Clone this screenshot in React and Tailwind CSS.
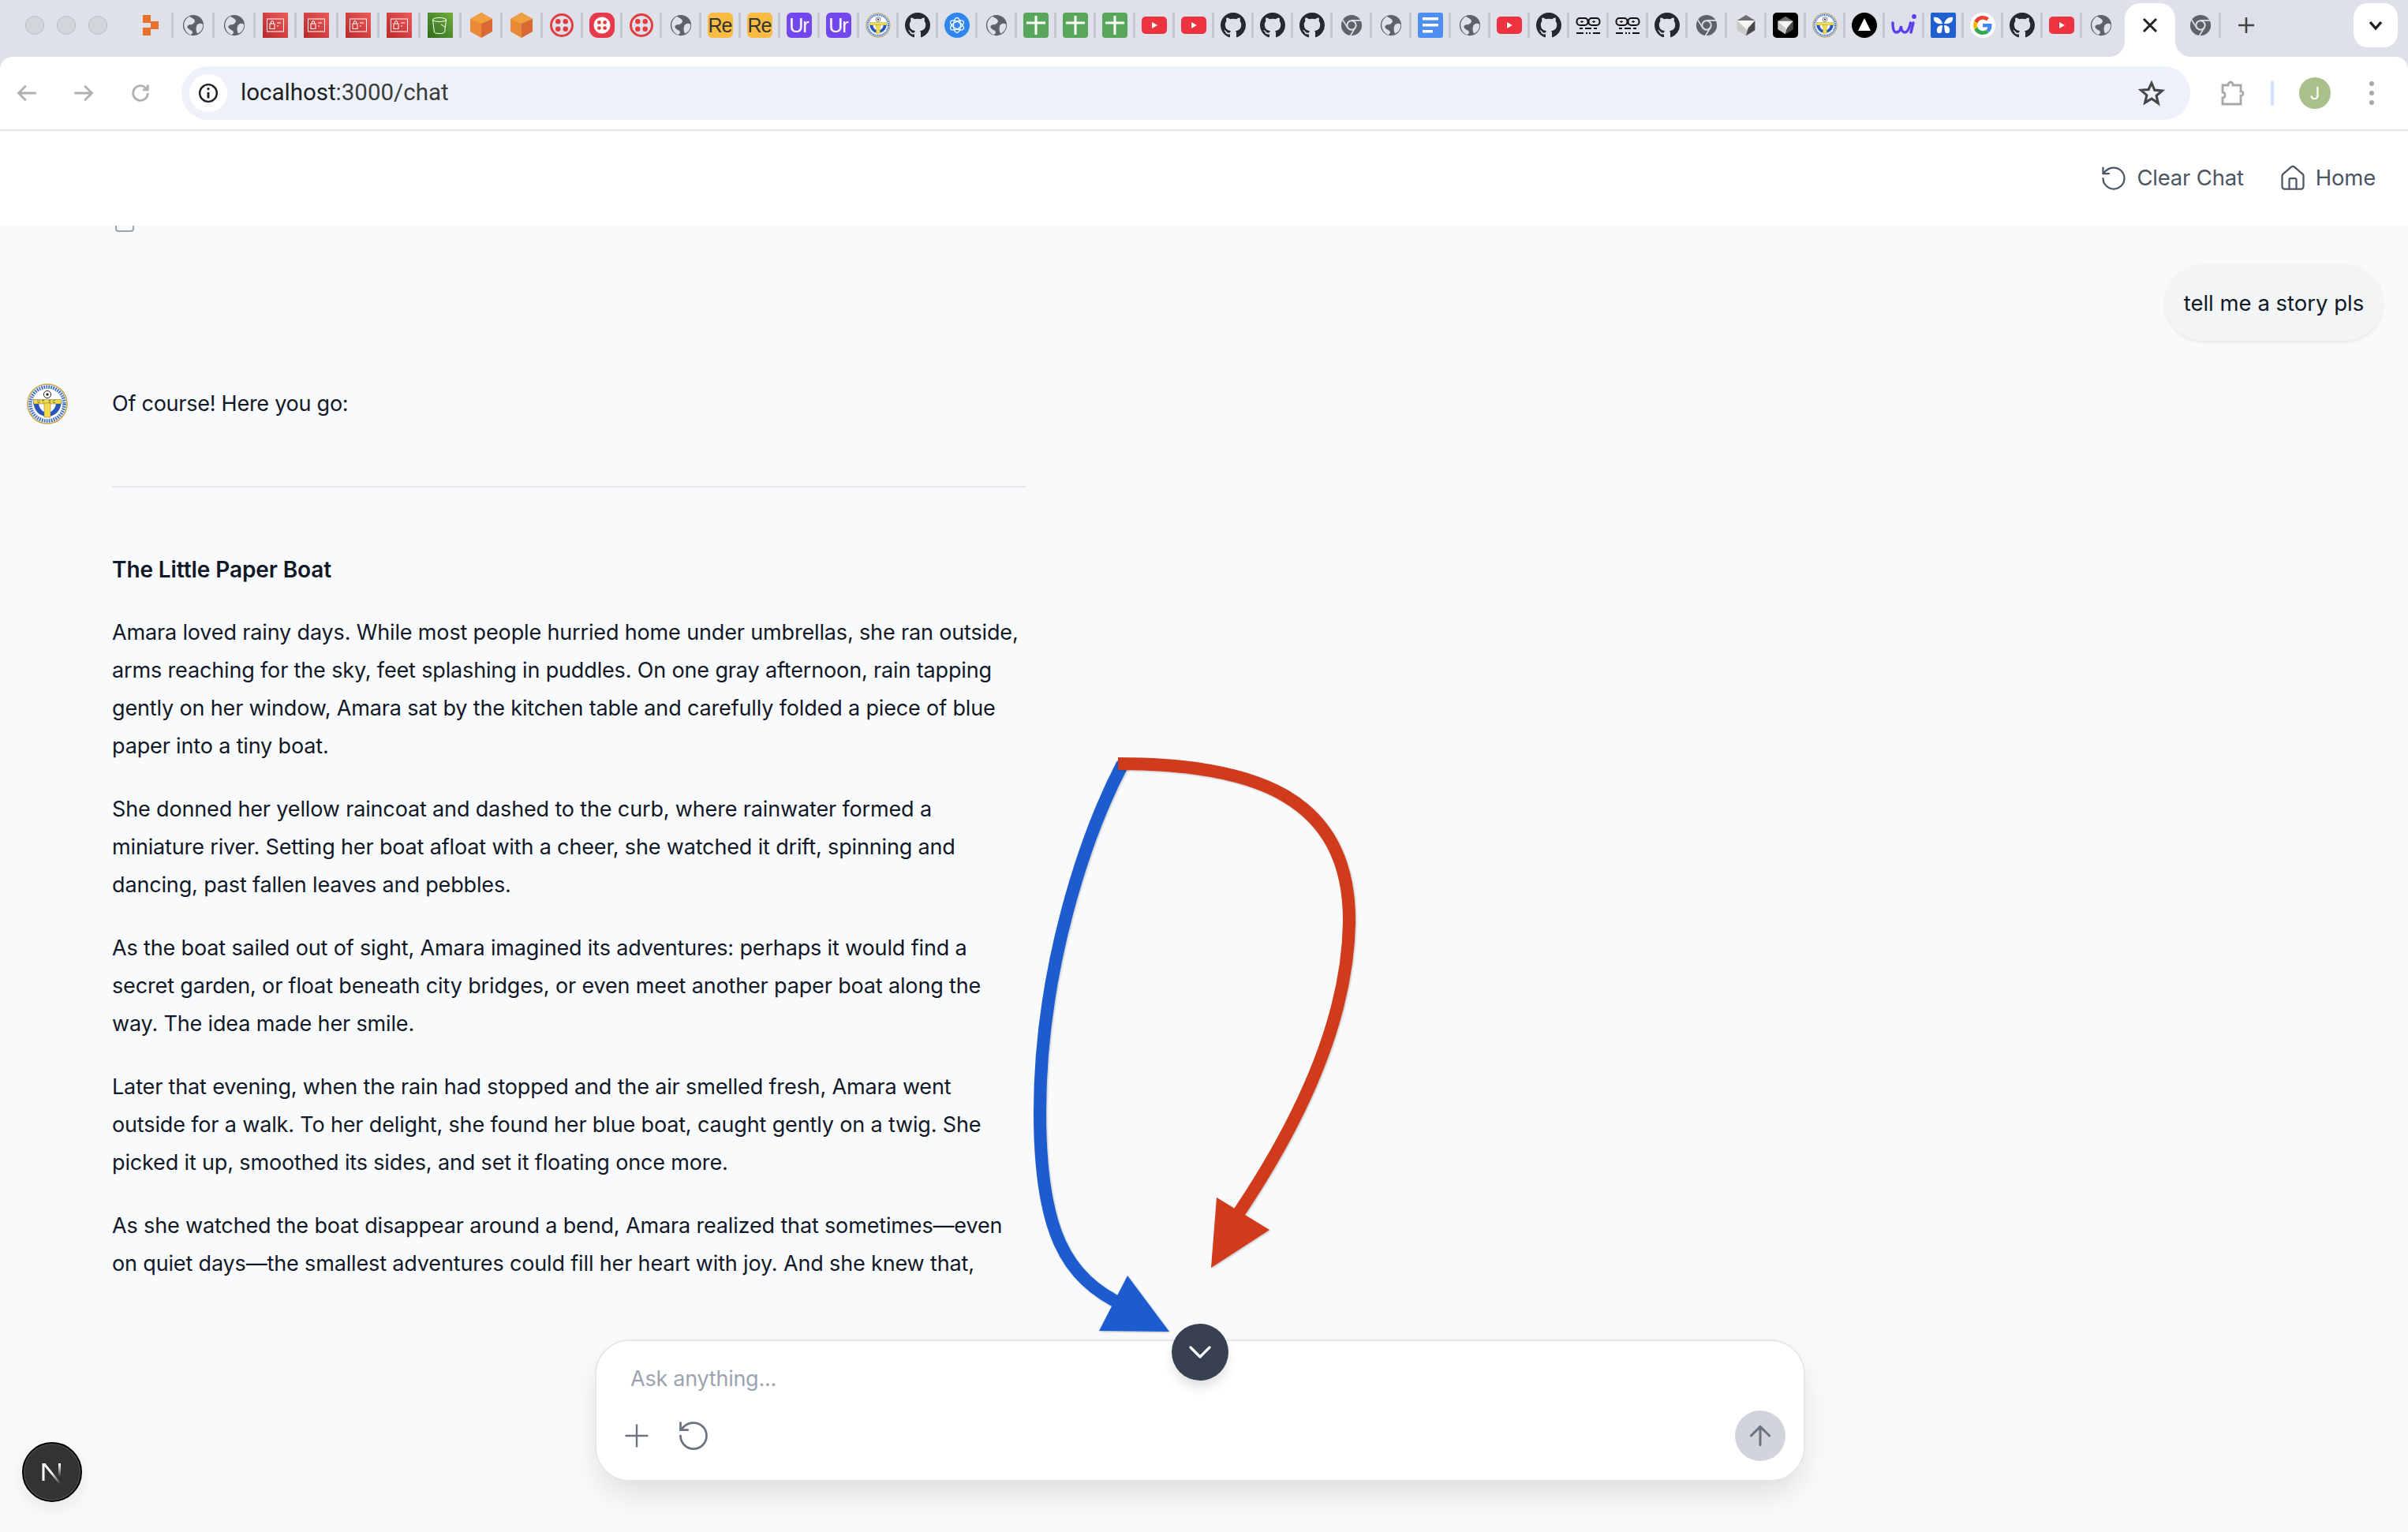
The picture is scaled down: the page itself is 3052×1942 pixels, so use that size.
import React from "react";

const font = "font-['Inter',sans-serif]";

const Globe = () => (
  <svg viewBox="0 0 32 32" className="w-7 h-7">
    <circle cx="16" cy="16" r="15" fill="#5f6368" />
    <path d="M10 3c3 2 7 3 8 6s-3 6-6 6-6 2-4 5 7 3 7 7l-3 3C6 28 1 20 3 12c1-4 4-7 7-9Z" fill="#dee1e9" />
    <path d="M22 15c3-2 6-2 8 0 0 6-3 11-8 13-2-2-3-10 0-13Z" fill="#dee1e9" />
  </svg>
);
const Github = () => (
  <svg viewBox="0 0 16 16" className="w-8 h-8" fill="#24292f">
    <path d="M8 0C3.58 0 0 3.58 0 8c0 3.54 2.29 6.53 5.47 7.59.4.07.55-.17.55-.38 0-.19-.01-.82-.01-1.49-2.01.37-2.53-.49-2.69-.94-.09-.23-.48-.94-.82-1.13-.28-.15-.68-.52-.01-.53.63-.01 1.08.58 1.23.82.72 1.21 1.87.87 2.33.66.07-.52.28-.87.51-1.07-1.78-.2-3.64-.89-3.64-3.95 0-.87.31-1.59.82-2.15-.08-.2-.36-1.02.08-2.12 0 0 .67-.21 2.2.82.64-.18 1.32-.27 2-.27s1.36.09 2 .27c1.53-1.04 2.2-.82 2.2-.82.44 1.1.16 1.92.08 2.12.51.56.82 1.27.82 2.15 0 3.07-1.87 3.75-3.65 3.95.29.25.54.73.54 1.48 0 1.07-.01 1.93-.01 2.2 0 .21.15.46.55.38A8 8 0 0 0 16 8c0-4.42-3.58-8-8-8Z" />
  </svg>
);
const Chrome = () => (
  <svg viewBox="0 0 32 32" className="w-7 h-7">
    <circle cx="16" cy="16" r="15" fill="#5f6368" />
    <circle cx="16" cy="16" r="6.500" fill="#5f6368" stroke="#dee1e9" strokeWidth="2.200" />
    <path d="M16 9h14M10 19 3 8M21 20l-7 12" stroke="#dee1e9" strokeWidth="1.800" />
  </svg>
);
const AwsRed = () => (
  <svg viewBox="0 0 32 32" className="w-8 h-8">
    <defs>
      <linearGradient id="awsr" x1="1" y1="0" x2="0" y2="1">
        <stop offset="0" stopColor="#ee5a5a" />
        <stop offset="1" stopColor="#b82a2a" />
      </linearGradient>
    </defs>
    <rect width="32" height="32" fill="url(#awsr)" />
    <rect x="5.500" y="8" width="21" height="16" fill="none" stroke="#fff" strokeWidth="1" />
    <rect x="9" y="14" width="6" height="6.500" fill="none" stroke="#fff" strokeWidth="1" />
    <path d="M10.500 14v-2a1.500 1.500 0 0 1 3 0v2M18 13h5M18 17h2" stroke="#fff" strokeWidth="1" fill="none" />
  </svg>
);
const Bucket = () => (
  <svg viewBox="0 0 32 32" className="w-8 h-8">
    <defs>
      <linearGradient id="bkt" x1="1" y1="0" x2="0" y2="1">
        <stop offset="0" stopColor="#6fae3f" />
        <stop offset="1" stopColor="#2f6a1a" />
      </linearGradient>
    </defs>
    <rect width="32" height="32" fill="url(#bkt)" />
    <ellipse cx="15" cy="9" rx="8.500" ry="2.500" fill="none" stroke="#fff" strokeWidth="1" />
    <path d="M6.500 9l2 16c1 2 12 2 13 0l2-16M17 15l6 4" stroke="#fff" strokeWidth="1" fill="none" />
  </svg>
);
const Cube = () => (
  <svg viewBox="0 0 32 32" className="w-8 h-8">
    <path d="M16 0 30 8v16l-14 8Z" fill="#da6a33" />
    <path d="M16 0 2 8v16l14 8Z" fill="#ea8a36" />
    <path d="M16 0 30 8 16 14 2 8Z" fill="#f0a040" />
  </svg>
);
const Twilio = ({ filled }) => {
  const a = filled ? 12.4 : 11.3;
  const b = filled ? 19.6 : 20.7;
  return (
    <svg viewBox="0 0 32 32" className="w-8 h-8">
      {filled ? <rect width="32" height="32" rx="11" fill="#e6394a" /> : null}
      <circle cx="16" cy="16" r={filled ? 10.5 : 13.5} fill={filled ? "#fff" : "none"} stroke={filled ? "none" : "#e23c3c"} strokeWidth="3" />
      {[[a, a], [b, a], [a, b], [b, b]].map(([x, y]) => (
        <circle key={x + "-" + y} cx={x} cy={y} r={filled ? 2.4 : 3.2} fill="#e23c3c" />
      ))}
    </svg>
  );
};
const Letter = ({ bg, fg, children }) => (
  <div className={`w-8 h-8 rounded-[6px] flex items-center justify-center text-[25px] leading-none tracking-[-1px] font-['Liberation_Sans',sans-serif] ${bg} ${fg}`}>
    {children}
  </div>
);
const Crest = ({ size, label }) => (
  <svg viewBox="0 0 52 52" className={size}>
    <circle cx="26" cy="26" r="25" fill="#fff" stroke="#c9a84a" strokeWidth="1.600" />
    <circle cx="26" cy="26" r="21.500" fill="none" stroke="#3f6fc8" strokeWidth="4.500" strokeDasharray="1.800 1.200" />
    <path d="M8.500 24h35c0 10-7.500 18-17.500 18S8.500 34 8.500 24Z" fill="#2a55b8" />
    <path d="M15 26h22c-1 6-5 10-11 12-6-2-10-6-11-12Z" fill="#fff" />
    <rect x="8.500" y="20.500" width="35" height="5.500" fill="#f3dc4c" stroke="#444" strokeWidth="0.400" />
    {label ? (
      <text x="26" y="25" textAnchor="middle" fontSize="4.500" fontFamily="Liberation Sans, sans-serif" fill="#2a2a2a" letterSpacing="2.500">UT FC</text>
    ) : null}
    <rect x="22" y="25" width="8" height="18" fill="#f3dc4c" stroke="#5a5a30" strokeWidth="0.400" />
    <circle cx="26" cy="14" r="4.600" fill="#fff" stroke="#222" strokeWidth="1" />
    <circle cx="26" cy="14" r="1.700" fill="#222" />
  </svg>
);
const OpenAi = () => (
  <div className="w-8 h-8 rounded-full bg-[#2f86f0] flex items-center justify-center">
    <svg viewBox="0 0 24 24" className="w-6 h-6" fill="none" stroke="#fff" strokeWidth="1.300">
      <ellipse cx="12" cy="12" rx="4.500" ry="9.500" />
      <ellipse cx="12" cy="12" rx="4.500" ry="9.500" transform="rotate(60 12 12)" />
      <ellipse cx="12" cy="12" rx="4.500" ry="9.500" transform="rotate(120 12 12)" />
    </svg>
  </div>
);
const GreenPlus = () => (
  <svg viewBox="0 0 32 32" className="w-8 h-8">
    <rect width="32" height="32" rx="4" fill="#58a65c" />
    <path d="M16 4v24M4 13h24" stroke="#fff" strokeWidth="3" />
  </svg>
);
const Youtube = () => (
  <svg viewBox="0 0 32 22" className="w-8 h-[22px]">
    <rect width="32" height="22" rx="5" fill="#ee3340" />
    <path d="M13 7l7 4-7 4Z" fill="#fff" />
  </svg>
);
const Docs = () => (
  <svg viewBox="0 0 32 32" className="w-8 h-8">
    <rect width="32" height="32" rx="3" fill="#4e8ef0" />
    <path d="M6 6h20v3.500H6ZM6 14h20v3.500H6ZM6 22h13v3.500H6Z" fill="#fff" />
  </svg>
);
const Robot = () => (
  <svg viewBox="0 0 32 32" className="w-8 h-8" fill="none" stroke="#111">
    <rect x="1.500" y="7" width="14" height="9" rx="4" strokeWidth="2" />
    <rect x="16.500" y="7" width="14" height="9" rx="4" strokeWidth="2" />
    <path d="M6 11.500h4M8 10v3M21 11.500h4M23 10v3" strokeWidth="1.200" />
    <path d="M5 20h4M12 20h8M23 20h4M1 26h9M13 26h2M17 26h2M22 26h9" strokeWidth="2" />
  </svg>
);
const Prism = ({ dark }) => (
  <div className={`w-8 h-8 rounded-[5px] flex items-center justify-center ${dark ? "bg-black" : ""}`}>
    <svg viewBox="0 0 32 32" className={dark ? "w-6 h-7" : "w-7 h-7"}>
      <path d="M16 1 29 9 16 12 3 9Z" fill="#6e6e6e" />
      <path d="M3 9v14l13 8 3-11Z" fill="#c9c9c9" />
      <path d="M3 9 29 9 18 23Z" fill="#f7f7f7" />
      <path d="M29 9v14L16 31l3-11Z" fill="#4a4a4a" />
    </svg>
  </div>
);
const Triangle = () => (
  <svg viewBox="0 0 32 32" className="w-8 h-8">
    <circle cx="16" cy="16" r="16" fill="#000" />
    <path d="M16 7l8 16H8Z" fill="#fff" />
  </svg>
);
const Wi = () => (
  <svg viewBox="0 0 32 32" className="w-8 h-8" fill="none" stroke="#5b3df0" strokeWidth="3.400" strokeLinecap="round">
    <path d="M2 13c0 6 1 12 4.500 12S12 21 12.500 17c0 5 2 8 5 8s6-6 7-12" />
    <path d="M25 25c1-4 2-8 3-12" />
    <circle cx="29" cy="5" r="1.200" fill="#5b3df0" />
  </svg>
);
const Butterfly = () => (
  <svg viewBox="0 0 32 32" className="w-8 h-8">
    <rect width="32" height="32" rx="2" fill="#1f5fd0" />
    <path d="M15 14C13 8 9 5 4 6c-1 5 3 9 11 8ZM17 14c2-6 6-9 11-8 1 5-3 9-11 8ZM15 16c-5 0-8 3-7 8 1 3 5 3 6 0ZM17 16c5 0 8 3 7 8-1 3-5 3-6 0Z" fill="#fff" />
  </svg>
);
const Google = () => (
  <div className="w-8 h-8 rounded-full bg-white flex items-center justify-center">
    <svg viewBox="0 0 48 48" className="w-6 h-6">
      <path fill="#EA4335" d="M24 9.500c3.500 0 6.700 1.200 9.200 3.600l6.900-6.900C35.900 2.400 30.500 0 24 0 14.600 0 6.500 5.400 2.600 13.200l8 6.200C12.500 13.700 17.800 9.500 24 9.500Z" />
      <path fill="#4285F4" d="M47 24.500c0-1.600-.1-3.100-.4-4.500H24v9h12.900c-.6 3-2.200 5.500-4.800 7.200l7.700 6C44.300 38 47 31.800 47 24.500Z" />
      <path fill="#FBBC05" d="M10.600 28.600c-.5-1.400-.8-3-.8-4.600s.3-3.200.8-4.600l-8-6.200C.9 16.500 0 20.100 0 24s.9 7.500 2.600 10.800Z" />
      <path fill="#34A853" d="M24 48c6.500 0 11.900-2.100 15.800-5.800l-7.700-6c-2.100 1.400-4.900 2.300-8.100 2.300-6.200 0-11.500-4.200-13.400-9.900l-8 6.200C6.500 42.600 14.600 48 24 48Z" />
    </svg>
  </div>
);
const Mark = () => (
  <svg viewBox="0 0 32 32" className="w-8 h-8" fill="#ea702c">
    <rect x="4" y="3" width="10" height="10" />
    <rect x="14" y="11" width="10" height="10" />
    <rect x="4" y="19" width="10" height="10" />
  </svg>
);

const tabs = [
  [<Mark />, "w-[52px]"],
  [<Globe />, "w-[52px]"],
  [<Globe />, "w-[52px]"],
  [<AwsRed />, "w-[52px]"],
  [<AwsRed />, "w-[53px]"],
  [<AwsRed />, "w-[52px]"],
  [<AwsRed />, "w-[52px]"],
  [<Bucket />, "w-[52px]"],
  [<Cube />, "w-[52px]"],
  [<Cube />, "w-[51px]"],
  [<Twilio />, "w-[51px]"],
  [<Twilio filled />, "w-[50px]"],
  [<Twilio />, "w-[50px]"],
  [<Globe />, "w-[50px]"],
  [<Letter bg="bg-[#f9bb42]" fg="text-[#333]">Re</Letter>, "w-[50px]"],
  [<Letter bg="bg-[#f9bb42]" fg="text-[#333]">Re</Letter>, "w-[50px]"],
  [<Letter bg="bg-[#7347ee]" fg="text-white">Ur</Letter>, "w-[50px]"],
  [<Letter bg="bg-[#7347ee]" fg="text-white">Ur</Letter>, "w-[50px]"],
  [<Crest size="w-8 h-8" />, "w-[50px]"],
  [<Github />, "w-[50px]"],
  [<OpenAi />, "w-[50px]"],
  [<Globe />, "w-[50px]"],
  [<GreenPlus />, "w-[50px]"],
  [<GreenPlus />, "w-[50px]"],
  [<GreenPlus />, "w-[50px]"],
  [<Youtube />, "w-[50px]"],
  [<Youtube />, "w-[50px]"],
  [<Github />, "w-[50px]"],
  [<Github />, "w-[50px]"],
  [<Github />, "w-[50px]"],
  [<Chrome />, "w-[50px]"],
  [<Globe />, "w-[50px]"],
  [<Docs />, "w-[50px]"],
  [<Globe />, "w-[50px]"],
  [<Youtube />, "w-[50px]"],
  [<Github />, "w-[50px]"],
  [<Robot />, "w-[50px]"],
  [<Robot />, "w-[50px]"],
  [<Github />, "w-[50px]"],
  [<Chrome />, "w-[50px]"],
  [<Prism />, "w-[50px]"],
  [<Prism dark />, "w-[50px]"],
  [<Crest size="w-8 h-8" />, "w-[50px]"],
  [<Triangle />, "w-[50px]"],
  [<Wi />, "w-[50px]"],
  [<Butterfly />, "w-[50px]"],
  [<Google />, "w-[50px]"],
  [<Github />, "w-[50px]"],
  [<Youtube />, "w-[50px]"],
];

const paragraphs = [
  "Amara loved rainy days. While most people hurried home under umbrellas, she ran outside, arms reaching for the sky, feet splashing in puddles. On one gray afternoon, rain tapping gently on her window, Amara sat by the kitchen table and carefully folded a piece of blue paper into a tiny boat.",
  "She donned her yellow raincoat and dashed to the curb, where rainwater formed a miniature river. Setting her boat afloat with a cheer, she watched it drift, spinning and dancing, past fallen leaves and pebbles.",
  "As the boat sailed out of sight, Amara imagined its adventures: perhaps it would find a secret garden, or float beneath city bridges, or even meet another paper boat along the way. The idea made her smile.",
  "Later that evening, when the rain had stopped and the air smelled fresh, Amara went outside for a walk. To her delight, she found her blue boat, caught gently on a twig. She picked it up, smoothed its sides, and set it floating once more.",
  "As she watched the boat disappear around a bend, Amara realized that sometimes—even on quiet days—the smallest adventures could fill her heart with joy. And she knew that,",
];

export default function App() {
  return (
    <div className={`relative w-[3052px] h-[1942px] overflow-hidden flex flex-col bg-[#f9fafb] ${font}`}>
      {/* Tab strip */}
      <div className="h-[72px] shrink-0 bg-[#dee1e9] flex items-start">
        <div className="w-[168px] h-[64px] shrink-0 flex items-center gap-[16px] pl-[32px]">
          <div className="w-6 h-6 rounded-full bg-[#d2d5d9] border border-[#bcbfc3]" />
          <div className="w-6 h-6 rounded-full bg-[#d2d5d9] border border-[#bcbfc3]" />
          <div className="w-6 h-6 rounded-full bg-[#d2d5d9] border border-[#bcbfc3]" />
        </div>
        <div className="flex pt-[16px] h-[48px] box-content">
          {tabs.map(([icon, width], i) => (
            <div key={i} className={`${width} h-8 flex items-center relative`}>
              <div className="flex-1 flex items-center justify-center">{icon}</div>
              <div className="w-[3px] h-8 bg-[#c5c7ca] shrink-0" />
            </div>
          ))}
          <div className="w-[48px] h-8 flex items-center justify-center"><Globe /></div>
        </div>
        <div className="relative w-[64px] h-[68px] mt-1 ml-[6px] bg-white rounded-t-[20px] flex items-center justify-center pb-[12px]">
          <div className="absolute bottom-0 -left-5 w-5 h-5 bg-white">
            <div className="w-full h-full bg-[#dee1e9] rounded-br-[20px]" />
          </div>
          <div className="absolute bottom-0 -right-5 w-5 h-5 bg-white">
            <div className="w-full h-full bg-[#dee1e9] rounded-bl-[20px]" />
          </div>
          <svg viewBox="0 0 24 24" className="w-6 h-6" fill="none" stroke="#222" strokeWidth="3">
            <path d="M4 4l16 16M20 4 4 20" />
          </svg>
        </div>
        <div className="w-[46px] h-8 mt-4 flex items-center justify-end"><Chrome /></div>
        <div className="w-[3px] h-8 mt-4 ml-[9px] bg-[#c5c7ca]" />
        <div className="w-[34px] h-8 mt-4 ml-[15px] flex items-center justify-center">
          <svg viewBox="0 0 24 24" className="w-[24px] h-[24px]" fill="none" stroke="#444" strokeWidth="2.600">
            <path d="M12 2v20M2 12h20" />
          </svg>
        </div>
        <div className="w-[56px] h-[56px] mt-1 ml-[119px] rounded-[18px] bg-white flex items-center justify-center">
          <svg viewBox="0 0 24 24" className="w-[24px] h-[24px]" fill="none" stroke="#1f1f1f" strokeWidth="3.400">
            <path d="M5 8l7 8 7-8" />
          </svg>
        </div>
      </div>

      {/* Toolbar */}
      <div className="h-[94px] shrink-0 bg-[#dee1e9]">
        <div className="h-full bg-white rounded-t-[16px] border-b-2 border-[#e3e3e3] flex items-center">
          <div className="w-[230px] shrink-0 flex items-center pl-[20px] gap-[44px]">
            <svg viewBox="0 0 24 24" className="w-7 h-7" fill="none" stroke="#b0b0b0" strokeWidth="2.400">
              <path d="M22 12H3M11 4l-8 8 8 8" />
            </svg>
            <svg viewBox="0 0 24 24" className="w-7 h-7" fill="none" stroke="#b0b0b0" strokeWidth="2.400">
              <path d="M2 12h19M13 4l8 8-8 8" />
            </svg>
            <svg viewBox="0 0 24 24" className="w-7 h-7" fill="none" stroke="#b0b0b0" strokeWidth="2.400">
              <path d="M20 12a8 8 0 1 1-2.500-5.800L20 8.500M20 3v5.500h-5.500" />
            </svg>
          </div>
          <div className="w-[2546px] h-[68px] shrink-0 rounded-full bg-[#edf2fa] flex items-center pl-[10px] pr-[32px]">
            <div className="w-12 h-12 rounded-full bg-white flex items-center justify-center">
              <svg viewBox="0 0 24 24" className="w-[26px] h-[26px]" fill="none" stroke="#1f1f1f" strokeWidth="2.200">
                <circle cx="12" cy="12" r="10" />
                <path d="M12 11v7" strokeWidth="2.600" />
                <circle cx="12" cy="7" r="1.500" fill="#1f1f1f" stroke="none" />
              </svg>
            </div>
            <span className="ml-[17px] text-[29.5px] leading-none text-[#3c3c3c] font-['Roboto',sans-serif] flex-1">
              <span className="text-[#1f1f1f]">localhost</span>:3000/chat
            </span>
            <svg viewBox="0 0 24 24" className="w-[34px] h-[34px]" fill="none" stroke="#474747" strokeWidth="2.200" strokeLinejoin="miter">
              <path d="M12 3l2.700 6.300 6.800.6-5.200 4.500 1.600 6.700L12 17l-5.900 3.600 1.600-6.700-5.200-4.500 6.800-.6Z" />
            </svg>
          </div>
          <div className="flex-1 flex items-center pl-[38px]">
            <svg viewBox="0 0 32 32" className="w-8 h-8" fill="none" stroke="#a8a8a8" strokeWidth="2.800">
              <path d="M3 6h7c0-5 6-5 6 0h10v8c4-1 4 6 0 5v11H3v-8c4 1 4-8 0-7Z" />
            </svg>
            <div className="w-1 h-8 ml-[32px] rounded bg-[#d3e3fd]" />
            <div className="w-10 h-10 ml-[32px] rounded-full bg-[#a9c08b] flex items-center justify-center text-white text-[22px] font-['Roboto',sans-serif]">J</div>
            <div className="ml-[49px] flex flex-col gap-[6px]">
              <div className="w-[6px] h-[6px] rounded-full bg-[#a8a8a8]" />
              <div className="w-[6px] h-[6px] rounded-full bg-[#a8a8a8]" />
              <div className="w-[6px] h-[6px] rounded-full bg-[#a8a8a8]" />
            </div>
          </div>
        </div>
      </div>

      {/* App header */}
      <div className="h-[120px] shrink-0 bg-white flex items-center justify-end pr-[41px] gap-[44px] text-[#4b5563] text-[27.500px] tracking-[-0.2px] leading-none">
        <div className="flex items-center gap-[11px]">
          <svg viewBox="0 0 24 24" className="w-9 h-9" fill="none" stroke="#4b5563" strokeWidth="1.500" strokeLinecap="round" strokeLinejoin="round">
            <path d="M3 12a9 9 0 1 0 9-9 9.750 9.750 0 0 0-6.740 2.740L3 8" />
            <path d="M3 3v5h5" />
          </svg>
          <span>Clear Chat</span>
        </div>
        <div className="flex items-center gap-[11px]">
          <svg viewBox="0 0 24 24" className="w-9 h-9" fill="none" stroke="#4b5563" strokeWidth="1.500" strokeLinecap="round" strokeLinejoin="round">
            <path d="M15 21v-8a1 1 0 0 0-1-1h-4a1 1 0 0 0-1 1v8" />
            <path d="M3 10a2 2 0 0 1 .709-1.528l7-5.999a2 2 0 0 1 2.582 0l7 5.999A2 2 0 0 1 21 10v9a2 2 0 0 1-2 2H5a2 2 0 0 1-2-2z" />
          </svg>
          <span>Home</span>
        </div>
      </div>

      {/* Chat area */}
      <div className="flex-1 overflow-hidden relative">
        <div className="h-[1340px] overflow-hidden text-[#111827] text-[27px] tracking-[-0.15px] leading-[48px]">
          <div className="ml-[146px] -mt-[12px] w-6 h-[20px] rounded-[4px] border-2 border-[#9ca3af]" />
          <div className="flex justify-end pr-[32px] mt-[41px]">
            <div className="h-[97px] w-[276px] rounded-full bg-[#f3f4f6] shadow-[0_2px_4px_rgba(0,0,0,0.08)] flex items-center justify-center text-[27.500px] tracking-[0px]">tell me a story pls</div>
          </div>
          <div className="flex mt-[54px]">
            <div className="w-[142px] pl-[34px] shrink-0">
              <Crest size="w-[52px] h-[52px]" label />
            </div>
            <div className="w-[1158px]">
              <p className="pt-[2px] tracking-[-0.25px]">Of course! Here you go:</p>
              <div className="h-[2px] bg-[#e5e7eb] mt-[80px]" />
              <p className="font-semibold mt-[80px] text-[28px] tracking-[-0.1px]">The Little Paper Boat</p>
              {paragraphs.map((p) => (
                <p key={p.slice(0, 12)} className="mt-[32px]">{p}</p>
              ))}
            </div>
          </div>
        </div>
      </div>

      {/* Composer over the chat */}
      <div className="absolute left-[754px] top-[1698px] w-[1534px] h-[180px] rounded-[44px] bg-white border-2 border-[#e5e7eb] shadow-[0_20px_40px_-6px_rgba(0,0,0,0.12)] flex flex-col px-[33px]">
        <div className="pt-[30px] pl-[10px] text-[27px] tracking-[-0.25px] leading-[36px] text-[#9ca3af]">Ask anything...</div>
        <div className="flex items-center mt-[22px] h-16">
          <svg viewBox="0 0 24 24" className="w-9 h-9" fill="none" stroke="#6b7280" strokeWidth="1.600" strokeLinecap="round">
            <path d="M12 3v18M3 12h18" />
          </svg>
          <svg viewBox="0 0 24 24" className="w-11 h-11 ml-[32px]" fill="none" stroke="#6b7280" strokeWidth="1.500" strokeLinecap="round" strokeLinejoin="round">
            <path d="M3 12a9 9 0 1 0 9-9 9.750 9.750 0 0 0-6.740 2.740L3 8" />
            <path d="M3 3v5h5" />
          </svg>
          <div className="ml-auto -mr-[10px] w-16 h-16 rounded-full bg-[#d1d5db] flex items-center justify-center">
            <svg viewBox="0 0 24 24" className="w-10 h-10" fill="none" stroke="#6b7280" strokeWidth="1.800" strokeLinecap="round" strokeLinejoin="round">
              <path d="M12 19V5M5 12l7-7 7 7" />
            </svg>
          </div>
        </div>
      </div>

      {/* Scroll to bottom */}
      <div className="absolute left-[1485px] top-[1678px] w-[72px] h-[72px] rounded-full bg-[#374151] shadow-[0_10px_15px_-3px_rgba(0,0,0,0.15)] flex items-center justify-center">
        <svg viewBox="0 0 24 24" className="w-12 h-12" fill="none" stroke="#fff" strokeWidth="1.600" strokeLinecap="round" strokeLinejoin="round">
          <path d="M6 9l6 6 6-6" />
        </svg>
      </div>

      {/* Dev badge */}
      <div className="absolute left-[28px] top-[1828px] w-[76px] h-[76px] rounded-full bg-[#333] border-2 border-black shadow-[inset_0_0_0_1px_#5a5a5a,0_8px_24px_rgba(0,0,0,0.08)] flex items-center justify-center">
        <svg viewBox="0 0 32 32" className="w-8 h-8">
          <defs>
            <linearGradient id="ndiag" gradientUnits="userSpaceOnUse" x1="15" y1="16" x2="27" y2="31">
              <stop offset="0" stopColor="#fff" />
              <stop offset="1" stopColor="#fff" stopOpacity="0" />
            </linearGradient>
            <linearGradient id="nbar" gradientUnits="userSpaceOnUse" x1="25" y1="6" x2="25" y2="22">
              <stop offset="0" stopColor="#fff" />
              <stop offset="1" stopColor="#fff" stopOpacity="0" />
            </linearGradient>
          </defs>
          <rect x="3.500" y="5" width="3" height="22" fill="#fff" />
          <path d="M3.500 5H7.500L28 31 25.500 32Z" fill="url(#ndiag)" />
          <rect x="24" y="5" width="3" height="17" fill="url(#nbar)" />
        </svg>
      </div>

      {/* Annotation arrows */}
      <svg className="absolute left-0 top-0 pointer-events-none" width="3052" height="1942" viewBox="0 0 3052 1942">
        <defs>
          <filter id="as" x="-5%" y="-5%" width="110%" height="110%">
            <feDropShadow dx="1" dy="1" stdDeviation="1" floodColor="#000" floodOpacity="0.25" />
          </filter>
        </defs>
        <g filter="url(#as)">
          <path d="M1423 968C1375 1060 1318 1230 1318 1410C1318 1560 1350 1620 1425 1655" fill="none" stroke="#1e5bcf" strokeWidth="16" />
          <path d="M1429 1617 1482 1688 1393 1687Z" fill="#1e5bcf" />
        </g>
        <g filter="url(#as)">
          <path d="M1417 968C1590 968 1712 1010 1710 1170C1708 1290 1650 1420 1565 1545" fill="none" stroke="#d03a1f" strokeWidth="16" />
          <path d="M1542 1518 1609 1559 1535 1607Z" fill="#d03a1f" />
        </g>
      </svg>
    </div>
  );
}
